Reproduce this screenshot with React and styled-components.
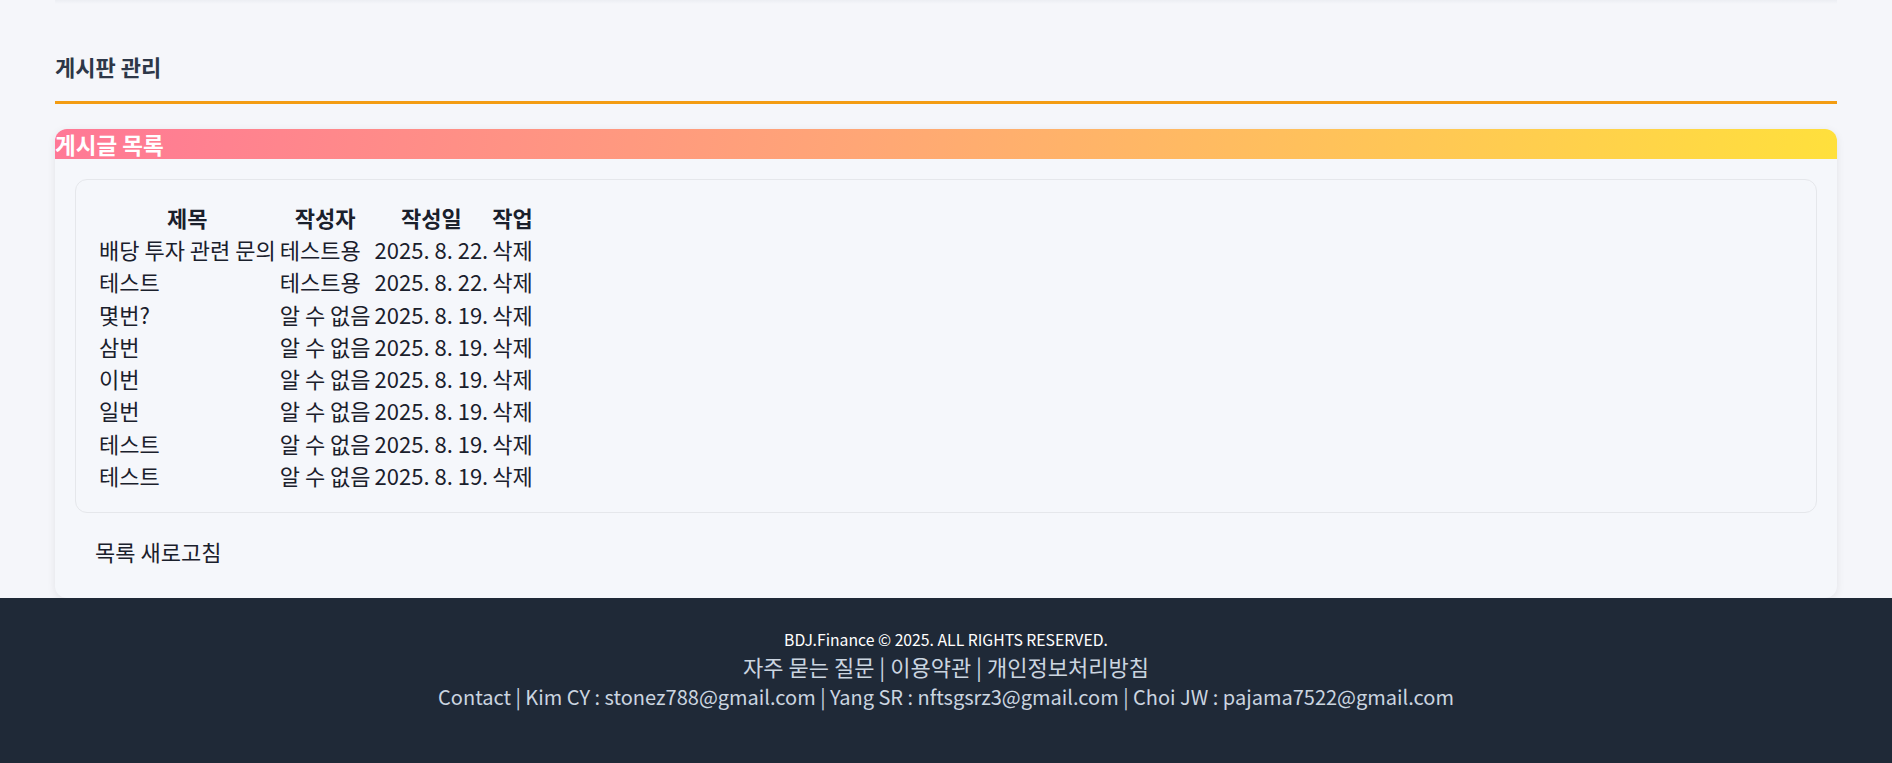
import React from "react";
import styled, { createGlobalStyle } from "styled-components";

const GlobalStyle = createGlobalStyle`
  body {
    margin: 0;
    background: #f5f6fa;
    font-family: "Noto Sans CJK KR", "Noto Sans", sans-serif;
    color: #1f2937;
  }
`;

const Page = styled.div`
  display: flex;
  flex-direction: column;
  min-height: 100vh;
`;

const Main = styled.main`
  padding: 0 55px;
`;

const TopEdge = styled.div`
  height: 4px;
  background: linear-gradient(to bottom, #eceef3, #f5f6fa);
`;

const SectionTitle = styled.h3`
  margin: 48px 0 0;
  padding-bottom: 20px;
  border-bottom: 3px solid #f39c12;
  font-size: 22px;
  line-height: 28.8px;
  font-weight: 700;
  color: #2d3748;
`;

const Card = styled.section`
  margin-top: 25px;
  background: #f5f7fb;
  border-radius: 12px;
  box-shadow: 0 2px 8px rgba(0, 0, 0, 0.08);
`;

const CardHeader = styled.h3`
  margin: 0;
  height: 30px;
  line-height: 30px;
  font-size: 22.5px;
  font-weight: 700;
  color: #fff;
  border-radius: 12px 12px 0 0;
  background: linear-gradient(100deg, #ff7896 0%, #ffa676 45%, #ffe03c 100%);
`;

const CardBody = styled.div`
  padding: 20px 20px 22px;
`;

const TableBox = styled.div`
  border: 1px solid #e5e7eb;
  border-radius: 12px;
  padding: 20px;
`;

const Table = styled.table`
  font-size: 22px;
  line-height: 28.25px;
  color: #1a202c;

  th {
    font-weight: 700;
  }
`;

const RefreshButton = styled.button`
  margin-top: 14px;
  padding: 10px 20px;
  border: none;
  background: transparent;
  font-family: inherit;
  font-size: 22px;
  line-height: 28.8px;
  color: #1a202c;
  cursor: pointer;
`;

const Footer = styled.footer`
  flex: 1;
  padding: 31px 20px;
  background: #1f2937;
  text-align: center;
`;

const FooterLine = styled.p`
  margin: 0;
  font-size: ${(p) => p.$size};
  line-height: ${(p) => p.$lh};
  color: ${(p) => p.$color};
`;

const posts = [
  { title: "배당 투자 관련 문의", author: "테스트용", date: "2025. 8. 22." },
  { title: "테스트", author: "테스트용", date: "2025. 8. 22." },
  { title: "몇번?", author: "알 수 없음", date: "2025. 8. 19." },
  { title: "삼번", author: "알 수 없음", date: "2025. 8. 19." },
  { title: "이번", author: "알 수 없음", date: "2025. 8. 19." },
  { title: "일번", author: "알 수 없음", date: "2025. 8. 19." },
  { title: "테스트", author: "알 수 없음", date: "2025. 8. 19." },
  { title: "테스트", author: "알 수 없음", date: "2025. 8. 19." },
];

export default function App() {
  return (
    <Page>
      <GlobalStyle />
      <Main>
        <TopEdge />
        <SectionTitle>게시판 관리</SectionTitle>
        <Card>
          <CardHeader>게시글 목록</CardHeader>
          <CardBody>
            <TableBox>
              <Table>
                <thead>
                  <tr>
                    <th>제목</th>
                    <th>작성자</th>
                    <th>작성일</th>
                    <th>작업</th>
                  </tr>
                </thead>
                <tbody>
                  {posts.map((post, i) => (
                    <tr key={i}>
                      <td>{post.title}</td>
                      <td>{post.author}</td>
                      <td>{post.date}</td>
                      <td>삭제</td>
                    </tr>
                  ))}
                </tbody>
              </Table>
            </TableBox>
            <RefreshButton>목록 새로고침</RefreshButton>
          </CardBody>
        </Card>
      </Main>
      <Footer>
        <FooterLine $size="15.75px" $lh="22px" $color="#ffffff">
          BDJ.Finance © 2025. ALL RIGHTS RESERVED.
        </FooterLine>
        <FooterLine $size="22px" $lh="31px" $color="#cbd5e0">
          자주 묻는 질문 | 이용약관 | 개인정보처리방침
        </FooterLine>
        <FooterLine $size="20px" $lh="30px" $color="#cbd5e0">
          Contact | Kim CY : stonez788@gmail.com | Yang SR : nftsgsrz3@gmail.com | Choi JW : pajama7522@gmail.com
        </FooterLine>
      </Footer>
    </Page>
  );
}
